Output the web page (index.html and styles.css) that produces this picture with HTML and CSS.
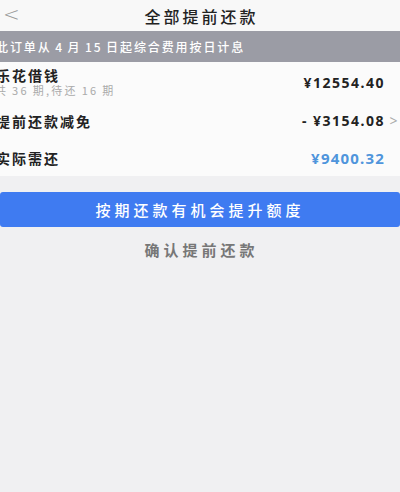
FILE: index.html
```html
<!DOCTYPE html>
<html lang="zh-CN">
<head>
<meta charset="utf-8">
<link rel="stylesheet" href="styles.css">
</head>
<body>
<div class="page">
  <header class="nav">
    <span class="back">&lt;</span>
    <span class="title">全部提前还款</span>
  </header>
  <div class="notice">此订单从 4 月 15 日起综合费用按日计息</div>
  <section class="card">
    <div class="row first">
      <div class="left">
        <div class="label">乐花借钱</div>
        <div class="sub">共 36 期,待还 16 期</div>
      </div>
      <div class="amount">¥12554.40</div>
    </div>
    <div class="row">
      <div class="label">提前还款减免</div>
      <div class="amount">- ¥3154.08<span class="arrow">&gt;</span></div>
    </div>
    <div class="row">
      <div class="label">实际需还</div>
      <div class="amount blue">¥9400.32</div>
    </div>
  </section>
  <button class="primary">按期还款有机会提升额度</button>
  <div class="confirm">确认提前还款</div>
</div>
</body>
</html>
```
FILE: styles.css
```css
html, body {
  margin: 0;
  padding: 0;
  background: #f0f0f2;
  font-family: "Noto Sans CJK SC", "Noto Sans", sans-serif;
}
.page {
  width: 400px;
  height: 492px;
  overflow: hidden;
  display: flex;
  flex-direction: column;
}
.nav {
  height: 31px;
  background: #f8f8f8;
  display: flex;
  align-items: center;
  justify-content: center;
  position: relative;
}
.back {
  position: absolute;
  left: 3px;
  top: 2px;
  font-size: 20px;
  color: #999;
  font-family: "DejaVu Sans", sans-serif;
  font-weight: 300;
}
.title {
  font-size: 16px;
  letter-spacing: 3px;
  color: #222;
  font-weight: 500;
  margin-left: 3px;
}
.notice {
  height: 31px;
  background: #9b9ca5;
  color: #fff;
  font-size: 12px;
  letter-spacing: 1.9px;
  word-spacing: -1px;
  display: flex;
  align-items: center;
  text-indent: -4px;
  font-weight: 500;
  white-space: pre;
}
.card {
  background: #fbfbfb;
  padding: 0 15px 0 0;
  display: flex;
  flex-direction: column;
  height: 114px;
}
.row {
  display: flex;
  align-items: center;
  justify-content: space-between;
  height: 37px;
}
.row.first {
  height: 40px;
}
.left {
  display: flex;
  flex-direction: column;
}
.label {
  font-size: 14px;
  font-weight: 700;
  color: #222;
  letter-spacing: 2px;
  margin-left: -4px;
  line-height: 16px;
}
.sub {
  font-size: 11px;
  color: #aaa;
  letter-spacing: 2.3px;
  word-spacing: -1px;
  margin-left: -5px;
  line-height: 13px;
  margin-top: 1px;
  white-space: pre;
}
.amount {
  font-size: 14px;
  font-weight: 700;
  color: #222;
  letter-spacing: 1.5px;
  font-family: "Noto Sans", "Noto Sans CJK SC", sans-serif;
  position: relative;
}
.amount.blue {
  color: #4f95dc;
  font-size: 15px;
  letter-spacing: 1.2px;
}
.arrow {
  position: absolute;
  right: -14px;
  top: 0;
  color: #aaa;
  font-weight: 400;
}
.primary {
  margin-top: 16px;
  height: 35px;
  border: none;
  border-radius: 3px;
  background: #3f7bf1;
  color: #fff;
  font-family: "Noto Sans CJK SC", sans-serif;
  font-size: 15px;
  letter-spacing: 4px;
  font-weight: 500;
  padding: 0;
  width: 400px;
}
.confirm {
  margin-top: 12px;
  text-align: center;
  font-size: 15px;
  color: #777;
  letter-spacing: 4px;
  font-weight: 700;
  margin-left: 3px;
}
```
